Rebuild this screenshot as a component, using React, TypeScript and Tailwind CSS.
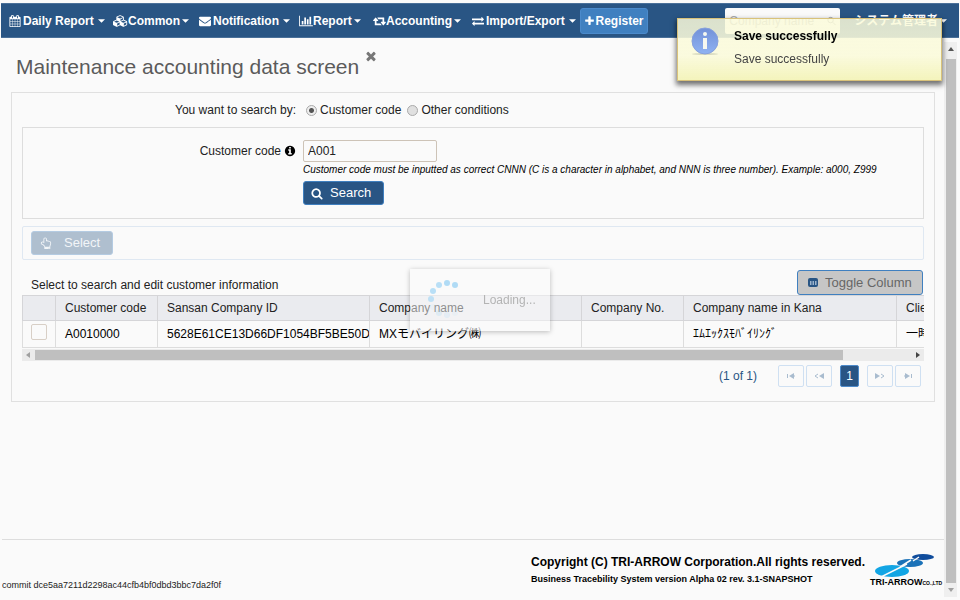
import React from "react";

type IconProps = { d: string; w?: number; className?: string };

function Icon({ d, w = 1792, className = "h-3 w-3" }: IconProps) {
  return (
    <svg viewBox={`0 0 ${w} 1792`} className={`shrink-0 ${className}`} fill="currentColor" aria-hidden="true">
      <path d={d} />
    </svg>
  );
}

const CALENDAR =
  "M192 1664h288v-288h-288v288zm352 0h320v-288h-320v288zm-352-352h288v-320h-288v320zm352 0h320v-320h-320v320zm-352-384h288v-288h-288v288zm736 736h320v-288h-320v288zm-384-736h320v-288h-320v288zm768 736h288v-288h-288v288zm-384-352h320v-320h-320v320zm-352-864v-288q0-13-9.5-22.5t-22.5-9.5h-64q-13 0-22.5 9.5t-9.5 22.5v288q0 13 9.5 22.5t22.5 9.5h64q13 0 22.5-9.5t9.5-22.5zm736 864h288v-320h-288v320zm-384-384h320v-288h-320v288zm384 0h288v-288h-288v288zm32-480v-288q0-13-9.5-22.5t-22.5-9.5h-64q-13 0-22.5 9.5t-9.5 22.5v288q0 13 9.5 22.5t22.5 9.5h64q13 0 22.5-9.5t9.5-22.5zm384-64v1280q0 52-38 90t-90 38h-1408q-52 0-90-38t-38-90v-1280q0-52 38-90t90-38h128v-96q0-66 47-113t113-47h64q66 0 113 47t47 113v96h384v-96q0-66 47-113t113-47h64q66 0 113 47t47 113v96h128q52 0 90 38t38 90z";
const CUBES =
  "M640 1632l384-192v-314l-384 164v342zm-64-454l404-173-404-173-404 173zm1088 454l384-192v-314l-384 164v342zm-64-454l404-173-404-173-404 173zm-448-293l384-165v-266l-384 164v267zm-64-379l441-189-441-189-441 189zm1088 518v416q0 36-19 67t-52 47l-448 224q-25 14-57 14t-57-14l-448-224q-5-2-7-4-2 2-7 4l-448 224q-25 14-57 14t-57-14l-448-224q-33-16-52-47t-19-67v-416q0-38 21.5-70t56.5-48l434-186v-400q0-38 21.5-70t56.5-48l448-192q23-10 50-10t50 10l448 192q35 16 56.5 48t21.5 70v400l434 186q36 16 57 48t21 70z";
const ENVELOPE =
  "M1792 710v794q0 66-47 113t-113 47h-1472q-66 0-113-47t-47-113v-794q44 49 101 87 362 246 497 345 57 42 92.5 65.5t94.5 48 110 24.5h2q51 0 110-24.5t94.5-48 92.5-65.5q170-123 498-345 57-39 100-87zm0-294q0 79-49 151t-122 123q-376 261-468 325-10 7-42.5 31t-54 38.5-52 32.5-57.5 27-50 9h-2q-23 0-50-9t-57.5-27-52-32.5-54-38.5-42.5-31q-91-64-262-182.5t-205-142.5q-62-42-117-115.5t-55-136.5q0-78 41.5-130t118.5-52h1472q65 0 112.5 47t47.5 113z";
const CHART =
  "M640 896v512h-256v-512h256zm384-512v1024h-256v-1024h256zm1024 1152v128h-2048v-1536h128v1408h1920zm-640-896v768h-256v-768h256zm384-384v1152h-256v-1152h256z";
const RETWEET =
  "M1280 1504q0 13-9.5 22.5t-22.5 9.5h-960q-8 0-13.5-2t-9-7-5.5-8-3-11.5-1-11.5v-600h-192q-26 0-45-19t-19-45q0-24 15-41l320-384q19-22 49-22t49 22l320 384q15 17 15 41 0 26-19 45t-45 19h-192v384h576q16 0 25 11l160 192q7 10 7 21zm640-416q0 24-15 41l-320 384q-20 23-49 23t-49-23l-320-384q-15-17-15-41 0-26 19-45t45-19h192v-384h-576q-16 0-25-12l-160-192q-7-9-7-20 0-13 9.5-22.5t22.5-9.5h960q8 0 13.5 2t9 7 5.5 8 3 11.5 1 11.5v600h192q26 0 45 19t19 45z";
const EXCHANGE =
  "M1792 1184v192q0 13-9.5 22.5t-22.5 9.5h-1376v192q0 13-9.5 22.5t-22.5 9.5q-12 0-24-10l-319-320q-9-9-9-22 0-14 9-23l320-320q9-9 23-9 13 0 22.5 9.5t9.5 22.5v192h1376q13 0 22.5 9.5t9.5 22.5zm0-544q0 14-9 23l-320 320q-9 9-23 9-13 0-22.5-9.5t-9.5-22.5v-192h-1376q-13 0-22.5-9.5t-9.5-22.5v-192q0-13 9.5-22.5t22.5-9.5h1376v-192q0-14 9-23t23-9q12 0 24 10l319 319q9 9 9 23z";
const PLUS =
  "M1600 736v192q0 40-28 68t-68 28h-416v416q0 40-28 68t-68 28h-192q-40 0-68-28t-28-68v-416h-416q-40 0-68-28t-28-68v-192q0-40 28-68t68-28h416v-416q0-40 28-68t68-28h192q40 0 68 28t28 68v416h416q40 0 68 28t28 68z";
const TIMES =
  "M1490 1322q0 40-28 68l-136 136q-28 28-68 28t-68-28l-294-294-294 294q-28 28-68 28t-68-28l-136-136q-28-28-28-68t28-68l294-294-294-294q-28-28-28-68t28-68l136-136q28-28 68-28t68 28l294 294 294-294q28-28 68-28t68 28l136 136q28 28 28 68t-28 68l-294 294 294 294q28 28 28 68z";
const INFO =
  "M1152 1376v-160q0-14-9-23t-23-9h-96v-512q0-14-9-23t-23-9h-320q-14 0-23 9t-9 23v160q0 14 9 23t23 9h96v320h-96q-14 0-23 9t-9 23v160q0 14 9 23t23 9h448q14 0 23-9t9-23zm-128-896v-160q0-14-9-23t-23-9h-192q-14 0-23 9t-9 23v160q0 14 9 23t23 9h192q14 0 23-9t9-23zm640 416q0 209-103 385.5t-279.5 279.5-385.5 103-385.5-103-279.5-279.5-103-385.5 103-385.5 279.5-279.5 385.5-103 385.5 103 279.5 279.5 103 385.5z";
const SEARCH =
  "M1216 832q0-185-131.5-316.5t-316.5-131.5-316.5 131.5-131.5 316.5 131.5 316.5 316.5 131.5 316.5-131.5 131.5-316.5zm512 832q0 52-38 90t-90 38q-54 0-90-38l-343-342q-179 124-399 124-143 0-273.5-55.5t-225-150-150-225-55.5-273.5 55.5-273.5 150-225 225-150 273.5-55.5 273.5 55.5 225 150 150 225 55.5 273.5q0 220-124 399l343 343q37 37 37 90z";
const HAND =
  "M1408 1664q0-26-19-45t-45-19-45 19-19 45 19 45 45 19 45-19 19-45zm128-764q0-189-167-189-26 0-56 5-16-30-52.5-47.5t-73.5-17.5-69 18q-50-53-119-53-25 0-55.5 10t-47.5 25v-331q0-52-38-90t-90-38q-51 0-89.5 39t-38.5 89v576q-20 0-48.5-15t-55-33-68-33-84.5-15q-67 0-97.5 44.5t-30.5 115.5q0 24 139 90 44 24 65 37 64 40 145 112 81 71 106 101 57 69 57 140v32h640v-32q0-72 32-167t64-193.5 32-179.5zm128-5q0 133-69 322-59 164-59 223v288q0 53-37.5 90.5t-90.5 37.5h-640q-53 0-90.5-37.5t-37.5-90.5v-288q0-10-4.5-21.5t-14-23.5-18-22.5-22.5-24-21.5-20.5-21.5-19-17-14q-74-65-129-100-21-13-62-33t-72-37-63-40.5-49.5-55-17.5-69.5q0-125 67-206.5t189-81.5q68 0 128 22v-374q0-104 77-181t179-77q105 0 181 75.5t76 180.5v169q62 4 119 37 21-3 43-3 101 0 178 60 139-1 219.5 85t80.5 227z";

function Caret() {
  return (
    <svg viewBox="0 0 8 4" className="h-[4px] w-[7px] shrink-0" fill="currentColor" aria-hidden="true">
      <path d="M0 0h8L4 4z" />
    </svg>
  );
}

type MenuItem = { label: string; icon: string; w?: number; iconClass: string; box: string };

const MENU: MenuItem[] = [
  { label: "Daily Report", icon: CALENDAR, iconClass: "h-3 w-3", box: "w-[104px] gap-[2px]" },
  { label: "Common", icon: CUBES, w: 2304, iconClass: "h-3 w-[15px]", box: "w-[86px]" },
  { label: "Notification", icon: ENVELOPE, iconClass: "h-3 w-3", box: "w-[100px] gap-[2px]" },
  { label: "Report", icon: CHART, w: 2048, iconClass: "h-3 w-[14px]", box: "w-[74px]" },
  { label: "Accounting", icon: RETWEET, w: 1920, iconClass: "h-3 w-[13px]", box: "w-[99px]" },
  { label: "Import/Export", icon: EXCHANGE, iconClass: "h-3 w-3", box: "w-[107px] gap-[2px]" },
];

function NavBar() {
  return (
    <header className="mx-px mt-[3px] flex h-[35px] items-center border-y border-[#4a7099] bg-[#295584] pr-3 pl-2 text-[12px] font-bold text-white">
      <nav className="flex items-center">
        {MENU.map((m) => (
          <button key={m.label} type="button" className={`flex shrink-0 items-center whitespace-nowrap ${m.box}`}>
            <Icon d={m.icon} w={m.w} className={m.iconClass} />
            <span className="mr-[2px]">{m.label}</span>
            <Caret />
          </button>
        ))}
        <button
          type="button"
          className="ml-px flex h-[26px] w-[68px] items-center justify-center rounded-[3px] border border-[#4b8acb] bg-[#4080c0]"
        >
          <Icon d={PLUS} className="h-3 w-[11px]" />
          Register
        </button>
      </nav>
      <div className="ml-auto flex items-center">
        <label className="flex h-[26px] w-[115px] items-center rounded-[2px] bg-[#fafafa] px-1">
          <input
            type="text"
            aria-label="Company name"
            placeholder="Company name"
            className="w-[98px] bg-transparent text-[12px] font-normal outline-none placeholder:text-[#aaaaaa]"
          />
          <svg viewBox="0 0 10 10" className="h-[10px] w-[10px]" fill="none" stroke="#999" aria-hidden="true">
            <circle cx="4" cy="4" r="3" />
            <path d="M6.500 6.500 9.500 9.500" />
          </svg>
        </label>
        <button type="button" className="ml-[14px] flex items-center whitespace-nowrap">
          <span className="mr-[2px]">システム管理者</span>
          <Caret />
        </button>
      </div>
    </header>
  );
}

function SearchForm() {
  return (
    <>
      <fieldset className="flex h-[34px] items-center">
        <span className="w-[274px] text-right">You want to search by:</span>
        <label className="ml-[10px] flex items-center gap-[3px]">
          <input
            type="radio"
            name="mode"
            defaultChecked
            className="h-[11px] w-[11px] appearance-none rounded-full border border-[#aaaaaa] bg-[#eeeeee] bg-[radial-gradient(circle,#555_0_2px,transparent_3px)]"
          />
          Customer code
        </label>
        <label className="ml-[6px] flex items-center gap-[3px]">
          <input
            type="radio"
            name="mode"
            className="h-[11px] w-[11px] appearance-none rounded-full border border-[#aaaaaa] bg-[#e0e0e0]"
          />
          Other conditions
        </label>
      </fieldset>
      <section className="flex h-[92px] gap-[7px] border border-[#dddddd] pt-3">
        <label htmlFor="code" className="flex h-[22px] w-[273px] shrink-0 items-center justify-end gap-[3px]">
          Customer code
          <Icon d={INFO} className="h-3 w-3 text-black" />
        </label>
        <div className="flex flex-col items-start">
          <input
            id="code"
            type="text"
            defaultValue="A001"
            className="h-[22px] w-[134px] rounded-[2px] border border-[#cdc3b7] bg-[#fafafa] px-1 outline-none"
          />
          <p className="h-[19px] text-[10px] leading-[15px] whitespace-nowrap text-black italic">
            Customer code must be inputted as correct CNNN (C is a character in alphabet, and NNN is three number).
            Example: a000, Z999
          </p>
          <button
            type="button"
            className="flex h-6 w-[81px] items-center gap-[7px] rounded-[3px] border border-[#3f7fbf] bg-[#295584] pl-[7px] text-[13px] text-white"
          >
            <Icon d={SEARCH} className="h-[13px] w-3" />
            Search
          </button>
        </div>
      </section>
    </>
  );
}

const COLUMNS = [
  { label: "Customer code", value: "A0010000" },
  { label: "Sansan Company ID", value: "5628E61CE13D66DF1054BF5BE50D8" },
  { label: "Company name", value: "MXモバイリング㈱" },
  { label: "Company No.", value: "" },
  { label: "Company name in Kana", value: "ｴﾑｴｯｸｽﾓﾊﾞｲﾘﾝｸﾞ" },
  { label: "Client type", value: "一時取引先" },
];

function CustomerTable() {
  return (
    <div className="overflow-hidden">
      <table className="w-[980px] table-fixed border-collapse text-left whitespace-nowrap">
        <colgroup>
          <col className="w-[33px]" />
          <col className="w-[102px]" />
          <col className="w-[212px]" />
          <col className="w-[212px]" />
          <col className="w-[102px]" />
          <col className="w-[213px]" />
          <col className="w-[106px]" />
        </colgroup>
        <thead>
          <tr className="h-[25px] bg-[#eaebef]">
            <th className="border border-[#d5d5d8]" aria-label="Selection" />
            {COLUMNS.map((c) => (
              <th key={c.label} className="overflow-hidden border border-[#d5d5d8] p-0 pl-[9px] font-normal">
                {c.label}
              </th>
            ))}
          </tr>
        </thead>
        <tbody>
          <tr className="h-[27px]">
            <td className="border border-[#dddddd] p-0 pb-1 pl-2">
              <input
                type="checkbox"
                aria-label="Select row"
                className="block h-4 w-4 appearance-none rounded-[2px] border border-[#d8cfc6] bg-[#fafafa]"
              />
            </td>
            {COLUMNS.map((c) => (
              <td key={c.label} className="overflow-hidden border border-[#dddddd] p-0 pl-[9px] text-black">
                {c.value}
              </td>
            ))}
          </tr>
        </tbody>
      </table>
      <div className="mt-px flex h-3 items-center bg-[#ebebeb]">
        <svg viewBox="0 0 12 12" className="h-3 w-3 shrink-0" fill="#a0a0a0" aria-hidden="true">
          <path d="M8 3v6L4 6z" />
        </svg>
        <div className="flex-1">
          <div className="ml-px h-[10px] w-[92%] bg-[#bfbfbf]" />
        </div>
        <svg viewBox="0 0 12 12" className="h-3 w-3 shrink-0" fill="#444" aria-hidden="true">
          <path d="M4 3v6l4-3z" />
        </svg>
      </div>
    </div>
  );
}

const PAGER = "flex h-[22px] w-[26px] items-center justify-center rounded-[2px] border border-[#cfe0f2] text-[#a9bccf]";

function Glyph({ line, solid }: { line: string; solid: string }) {
  return (
    <svg viewBox="0 0 12 6" className="h-[6px] w-3" aria-hidden="true">
      <path d={line} fill="none" stroke="currentColor" />
      <path d={solid} fill="currentColor" />
    </svg>
  );
}

function Pagination() {
  return (
    <div className="mt-1 flex items-center pr-[3px] text-[#295584]">
      <span className="mr-[21px] ml-auto">(1 of 1)</span>
      <button type="button" aria-label="First page" className={PAGER}>
        <Glyph line="M2.500 1v4M7 3h3" solid="M9 0v6L4 3z" />
      </button>
      <button type="button" aria-label="Previous page" className={`ml-[2px] ${PAGER}`}>
        <Glyph line="M5 1 2 3l3 2" solid="M11 0v6L6 3z" />
      </button>
      <button
        type="button"
        className="mx-2 flex h-[22px] w-[19px] items-center justify-center rounded-[2px] border border-[#4d8aca] bg-[#295584] text-white"
      >
        1
      </button>
      <button type="button" aria-label="Next page" className={PAGER}>
        <Glyph line="M7 1l3 2-3 2" solid="M1 0v6l5-3z" />
      </button>
      <button type="button" aria-label="Last page" className={`ml-[2px] ${PAGER}`}>
        <Glyph line="M9.500 1v4M2 3h3" solid="M3 0v6l5-3z" />
      </button>
    </div>
  );
}

function Footer() {
  return (
    <footer className="mt-auto ml-[2px] flex h-[61px] items-start overflow-hidden border-t border-[#dddddd]">
      <p className="mt-[39px] text-[9px] leading-3 whitespace-nowrap text-[#222]">
        commit dce5aa7211d2298ac44cfb4bf0dbd3bbc7da2f0f
      </p>
      <div className="mt-3 ml-auto font-bold whitespace-nowrap text-black">
        <p className="text-[12px] leading-5">Copyright (C) TRI-ARROW Corporation.All rights reserved.</p>
        <p className="text-[9px] leading-[14px]">Business Tracebility System version Alpha 02 rev. 3.1-SNAPSHOT</p>
      </div>
      <div className="mt-3 ml-1 w-[75px] shrink-0 overflow-hidden">
        <svg viewBox="0 0 75 25" className="block h-[25px] w-[75px]" aria-hidden="true">
          <ellipse cx="54" cy="5" rx="11" ry="3" fill="#0f4c9c" />
          <ellipse cx="41" cy="11" rx="13" ry="4" fill="#1b72b8" />
          <ellipse cx="23" cy="19" rx="17" ry="6" fill="#12a5e4" />
          <path d="M12 25 38 12M31 15 42 8M44 9 50 5" stroke="#fafafa" strokeWidth="1.500" />
        </svg>
        <p className="flex items-baseline pl-px text-[9px] leading-[10px] font-bold whitespace-nowrap text-black">
          <span>TRI-ARROW</span>
          <span className="text-[5px]">CO.,LTD</span>
        </p>
      </div>
    </footer>
  );
}

function ScrollBar() {
  return (
    <div className="mt-1 mr-[3px] mb-[3px] flex w-[13px] shrink-0 flex-col items-center bg-[#efefef]">
      <svg viewBox="0 0 12 17" className="h-[17px] w-3" fill="#555" aria-hidden="true">
        <path d="M3 9h6L6 5z" />
      </svg>
      <div className="w-[10px] flex-1 bg-[#bfbfbf]" />
      <svg viewBox="0 0 12 14" className="h-[14px] w-3" fill="#a0a0a0" aria-hidden="true">
        <path d="M3 5h6L6 9z" />
      </svg>
    </div>
  );
}

function Toast() {
  return (
    <div
      role="status"
      className="fixed top-[18px] right-[18px] flex h-[63px] w-[265px] border border-[#d9c27a] bg-linear-to-b from-[#fafada]/85 via-[#fafada]/90 via-60% to-[#f3f3b8]/95 pl-3 shadow-[0_3px_5px_1px_rgba(0,0,0,0.55)]"
    >
      <svg viewBox="0 0 30 30" className="mt-2 h-[30px] w-[30px]" aria-hidden="true">
        <defs>
          <linearGradient id="ball" x1="0" y1="0" x2="0" y2="1">
            <stop offset="0" stopColor="#7291d8" />
            <stop offset="1" stopColor="#8fb2f2" />
          </linearGradient>
        </defs>
        <ellipse cx="15" cy="27" rx="13" ry="1" fill="#d9dbc0" />
        <circle cx="15" cy="14" r="13" fill="url(#ball)" stroke="#86a0dc" />
        <circle cx="15" cy="7" r="2" fill="#f6f8f0" />
        <path d="M13 11h4v11h-4z" fill="#f6f8f0" />
      </svg>
      <div className="ml-[14px] text-[12px]">
        <p className="mt-[7px] leading-5 font-bold text-black">Save successfully</p>
        <p className="mt-[3px] leading-5 text-[#444]">Save successfully</p>
      </div>
    </div>
  );
}

const DOTS = [
  [24, 6, 0.9],
  [16, 4, 0.9],
  [8, 6, 0.8],
  [2, 12, 0.8],
  [0, 20, 0.7],
  [2, 28, 0.1],
  [8, 34, 0.25],
  [16, 36, 0.2],
  [24, 34, 0.1],
];

function Loading() {
  return (
    <div className="fixed top-1/2 left-1/2 flex h-[62px] w-[140px] -translate-x-1/2 -translate-y-1/2 items-center bg-[#fafafa]/50 pl-[17px] shadow-[0_1px_5px_rgba(0,0,0,0.25)]">
      <svg viewBox="-4 0 34 42" className="h-[42px] w-[34px]" fill="#a9d8f5" aria-hidden="true">
        {DOTS.map(([x, y, o]) => (
          <circle key={`${x}-${y}`} cx={x} cy={y} r="3" opacity={o} />
        ))}
      </svg>
      <span className="ml-[22px] text-[#b4b4b4]">Loading...</span>
    </div>
  );
}

export default function App() {
  return (
    <div className="flex min-h-screen flex-col bg-[#fafafa] font-['Liberation_Sans','Noto_Sans_CJK_JP',sans-serif] text-[12px] leading-4 text-[#222]">
      <NavBar />
      <div className="flex flex-1">
        <main className="flex min-w-0 flex-1 flex-col">
          <h1 className="ml-4 flex h-[54px] items-start gap-[5px] text-[21px] text-[#5b5b5b]">
            <span className="mt-[15px] leading-7">Maintenance accounting data screen</span>
            <button type="button" aria-label="Close screen" className="mt-[11px] text-[#777]">
              <Icon d={TIMES} className="h-[14px] w-[14px]" />
            </button>
          </h1>
          <div className="mr-[9px] ml-[11px] h-[310px] border border-[#e0e0e0] px-[10px]">
            <SearchForm />
            <div className="mt-[7px] flex h-[34px] items-center rounded-[2px] border border-[#dfe8f2] pl-2">
              <button
                type="button"
                disabled
                className="flex h-6 w-[82px] items-center gap-3 rounded-[3px] border border-[#b4cbe2] bg-[#afbfcf] pl-2 text-[13px] text-[#f2f5f8]"
              >
                <Icon d={HAND} className="h-3 w-3" />
                Select
              </button>
            </div>
            <div className="flex h-[35px] items-end justify-between pl-[9px]">
              <p className="pb-[2px]">Select to search and edit customer information</p>
              <button
                type="button"
                className="mr-px flex h-[25px] w-[126px] items-center gap-[7px] rounded-[3px] border border-[#4080c0] bg-[#c6c6c6] pl-[10px] text-[13px] text-[#666]"
              >
                <svg viewBox="0 0 10 9" className="h-[9px] w-[10px]" aria-hidden="true">
                  <rect width="10" height="9" rx="2" fill="#295584" />
                  <path d="M2 3h1.500v4H2zM4.500 3H6v4H4.500zM7 3h1.500v4H7z" fill="#9db4cc" />
                </svg>
                Toggle Column
              </button>
            </div>
            <CustomerTable />
            <Pagination />
          </div>
          <Footer />
        </main>
        <ScrollBar />
      </div>
      <Loading />
      <Toast />
    </div>
  );
}
